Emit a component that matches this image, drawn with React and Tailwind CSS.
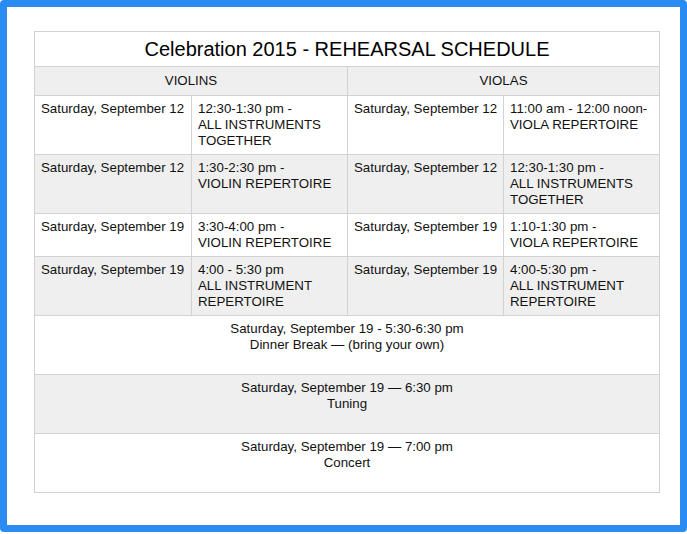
const rows = [
  {
    shade: false,
    violin: ['Saturday, September 12', ['12:30-1:30 pm -', 'ALL INSTRUMENTS', 'TOGETHER']],
    viola: ['Saturday, September 12', ['11:00 am - 12:00 noon-', 'VIOLA REPERTOIRE']],
  },
  {
    shade: true,
    violin: ['Saturday, September 12', ['1:30-2:30 pm -', 'VIOLIN REPERTOIRE']],
    viola: ['Saturday, September 12', ['12:30-1:30 pm -', 'ALL INSTRUMENTS', 'TOGETHER']],
  },
  {
    shade: false,
    violin: ['Saturday, September 19', ['3:30-4:00 pm -', 'VIOLIN REPERTOIRE']],
    viola: ['Saturday, September 19', ['1:10-1:30 pm -', 'VIOLA REPERTOIRE']],
  },
  {
    shade: true,
    violin: ['Saturday, September 19', ['4:00 - 5:30 pm', 'ALL INSTRUMENT', 'REPERTOIRE']],
    viola: ['Saturday, September 19', ['4:00-5:30 pm -', 'ALL INSTRUMENT', 'REPERTOIRE']],
  },
];

const events = [
  { shade: false, lines: ['Saturday, September 19 - 5:30-6:30 pm', 'Dinner Break \u2014 (bring your own)'] },
  { shade: true, lines: ['Saturday, September 19 \u2014 6:30 pm', 'Tuning'] },
  { shade: false, lines: ['Saturday, September 19 \u2014 7:00 pm', 'Concert'] },
];

const cell = 'border border-[#d2d2d2] px-[6px] pt-[5px] pb-[5px] align-top text-left';
const dateCell = cell + ' whitespace-nowrap';

const Lines = ({ lines }) => lines.map((l, i) => <div key={i} className="whitespace-nowrap">{l}</div>);

const App = () => {
  return (
    <div className="bg-white" style={{ fontFamily: 'Helvetica, "Liberation Sans", Arial, sans-serif' }}>
      <div className="w-[687px] h-[532px] border-[7px] border-[#2a8cf3] rounded-[4px] bg-white pl-[27px] pt-[24px]">
        <table className="w-[625px] border-collapse table-fixed text-[13.3px] leading-4 text-[#111]">
          <colgroup>
            <col className="w-[157px]" />
            <col className="w-[156px]" />
            <col className="w-[156px]" />
            <col className="w-[156px]" />
          </colgroup>
          <tbody>
            <tr>
              <td colSpan={4} className="border border-[#d2d2d2] h-[35px] text-center text-[20px] leading-6 text-black">
                Celebration 2015 - REHEARSAL SCHEDULE
              </td>
            </tr>
            <tr className="bg-[#efefef]">
              <td colSpan={2} className="border border-[#d2d2d2] h-[29px] text-center">VIOLINS</td>
              <td colSpan={2} className="border border-[#d2d2d2] h-[29px] text-center">VIOLAS</td>
            </tr>
            {rows.map((r, i) => (
              <tr key={i} className={r.shade ? 'bg-[#efefef]' : 'bg-white'}>
                <td className={dateCell}>{r.violin[0]}</td>
                <td className={cell}><Lines lines={r.violin[1]} /></td>
                <td className={dateCell}>{r.viola[0]}</td>
                <td className={cell}><Lines lines={r.viola[1]} /></td>
              </tr>
            ))}
            {events.map((e, i) => (
              <tr key={i} className={e.shade ? 'bg-[#efefef]' : 'bg-white'}>
                <td colSpan={4} className="border border-[#d2d2d2] h-[59px] pt-[5px] pb-[21px] align-top text-center">
                  <Lines lines={e.lines} />
                </td>
              </tr>
            ))}
          </tbody>
        </table>
      </div>
    </div>
  );
};

export default App;
